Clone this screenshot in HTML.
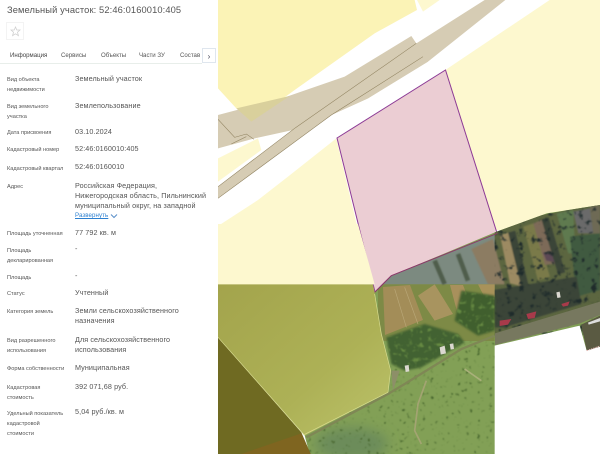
<!DOCTYPE html>
<html><head><meta charset="utf-8">
<style>
html,body{margin:0;padding:0;width:600px;height:454px;overflow:hidden;background:#fff}
body{font-family:"Liberation Sans",sans-serif;position:relative}
#map{position:absolute;left:0;top:0}
#side{position:absolute;left:0;top:0;width:218px;height:454px;background:#fff}
#side div{position:absolute;white-space:nowrap;filter:blur(.25px)}
.l{left:7px;font-size:5.6px;color:#555;line-height:10px;margin-top:1px}
.v{left:75px;font-size:7.2px;color:#555;line-height:10px;letter-spacing:.1px}
.t{top:50.5px;font-size:6.1px;line-height:10px;color:#555}
</style></head><body>
<svg id="map" width="600" height="454" viewBox="0 0 600 454" xmlns="http://www.w3.org/2000/svg">
<defs>
<filter id="n" x="0" y="0" width="100%" height="100%" color-interpolation-filters="sRGB"><feTurbulence type="fractalNoise" baseFrequency="0.085" numOctaves="2" seed="7"/><feColorMatrix values="0 0 0 0 0.28 0 0 0 0 0.4 0 0 0 0 0.18 3.5 3.5 0 0 -4.2"/><feGaussianBlur stdDeviation="1.2"/></filter>
<filter id="n2" x="0" y="0" width="100%" height="100%" color-interpolation-filters="sRGB"><feTurbulence type="fractalNoise" baseFrequency="0.05" numOctaves="3" seed="11"/><feColorMatrix values="0 0 0 0 0.12 0 0 0 0 0.17 0 0 0 0 0.17 3.5 3.5 0 0 -3.9"/><feGaussianBlur stdDeviation="1.5"/></filter>
<filter id="n3" x="0" y="0" width="100%" height="100%" color-interpolation-filters="sRGB"><feTurbulence type="fractalNoise" baseFrequency="0.07" numOctaves="2" seed="3"/><feColorMatrix values="0 0 0 0 0.4 0 0 0 0 0.54 0 0 0 0 0.26 3 3 0 0 -3.2"/><feGaussianBlur stdDeviation="1.5"/></filter>
<filter id="s" x="-10%" y="-10%" width="120%" height="120%"><feGaussianBlur stdDeviation="3"/></filter>
<filter id="s2" x="-10%" y="-10%" width="120%" height="120%"><feGaussianBlur stdDeviation="2"/></filter>
<filter id="s3" x="-30%" y="-30%" width="160%" height="160%"><feGaussianBlur stdDeviation="18"/></filter>
<linearGradient id="ol" x1="0" y1="0" x2="1" y2="1"><stop offset="0" stop-color="#a3a44c"/><stop offset=".6" stop-color="#adb156"/><stop offset="1" stop-color="#bcc36a"/></linearGradient>
<clipPath id="sat"><path d="M260,635 L470,205 L520,155 L836,23 L986,-32 L1146,-57 L1146,368 L1106,380 L1085,305 L830,365 L830,690 L275,690Z"/></clipPath>
<clipPath id="fr"><path d="M505,340L620,300L720,330L740,355L610,430L560,440L520,420ZM730,200L830,215V320L780,335L710,290Z"/></clipPath>
</defs>
<rect x="218" width="382" height="454" fill="#fff"/>
<g transform="translate(218,0) scale(.33333)">
<path d="M0,0H590L597,30L470,100L230,270L100,365L55,325L0,265Z" fill="#fbf3b6"/>
<path d="M597,0H665L615,35Z" fill="#fdf8cf"/>
<path d="M995,0H1146V690H835L682,210Z" fill="#fdf8cf"/>
<path d="M0,678L120,600L210,530L355,415L420,690L440,860H0Z" fill="#fdf8cf"/>
<path d="M0,475L120,415L130,450L0,545Z" fill="#fdf8cf"/>
<path d="M862,0H800L595,130L230,385L0,560V595L340,345L450,295L630,185Z" fill="#d6ccb4"/>
<path d="M0,345L200,292L380,230L580,108L595,130L620,160L630,185L450,295L340,345L225,390L110,415L0,445Z" fill="#d6ccb4"/>
<path d="M55,325L215,288L100,365Z" fill="#d9d09c"/>
<path d="M230,385L595,130M340,345L615,170M0,358L50,412L85,402L108,418M40,432L85,410M0,560L230,385M0,595L340,345" fill="none" stroke="#8d7f5c" stroke-width="1.6"/>
</g>
<path d="M337,138L445.5,70L497,233L391,276L375,292Z" fill="#ebcdd3" stroke="#8c3a95" stroke-width="1"/>
<g transform="translate(218,224) scale(.33333)">
<path d="M0,0H420L470,181H0Z" fill="#fdf8cf"/>
<g clip-path="url(#sat)">
<rect x="250" y="-60" width="900" height="750" fill="#82a056"/>
<ellipse cx="400" cy="660" rx="110" ry="50" fill="#6c8c5a" filter="url(#s3)"/>
<rect x="250" y="340" width="590" height="350" filter="url(#n)"/>
<path d="M460,181L520,155L838,28L870,181Z" fill="#7c8a80"/>
<rect x="480" y="181" width="350" height="170" fill="#7d8a46"/>
<path d="M830,0L1146,-60V240L830,335Z" fill="#5c6640"/>
<g filter="url(#s2)">
<path d="M760,75L825,45L860,181H810Z" fill="#8c7c62"/>
<path d="M846,33L881,23L916,188L876,178Z" fill="#9c8a62"/>
<path d="M916,8L946,-2L996,158L960,170Z" fill="#7a7a48"/>
<path d="M946,-2L981,-17L1016,118L981,123Z" fill="#7d6a58"/>
<path d="M975,85L1005,85L1010,115L985,110Z" fill="#5d4a55"/>
<path d="M1016,-32L1066,-42L1071,88L1051,88Z" fill="#5f7a50"/>
<path d="M1066,-37L1116,-47L1126,28L1081,28Z" fill="#6a6a6a"/>
<path d="M1116,-52L1146,-57V28H1126Z" fill="#6e6a55"/>
<path d="M1056,38L1146,28V198L1076,218Z" fill="#3f5a3f"/>
<path d="M826,198L1076,158L1090,240L860,310L830,310Z" fill="#3a4438"/>
<path d="M881,23L926,208M981,-17L1031,148" fill="none" stroke="#3a4438" stroke-width="22"/>
<path d="M650,110L680,180M720,90L750,170" fill="none" stroke="#4f5d4c" stroke-width="14"/>
</g>
<rect x="830" y="-60" width="316" height="400" filter="url(#n2)"/>
<path d="M495,189L576,183L615,288L501,333Z" fill="#a38d58"/>
<path d="M600,215L650,181L705,270L650,290Z" fill="#a8945f"/>
<path d="M696,183L735,183L762,252L720,273Z" fill="#a8905c"/>
<path d="M780,181H830V220H800Z" fill="#a8925a"/>
<path d="M530,195L565,310M560,190L600,300" stroke="#b9a777" stroke-width="2" fill="none"/>
<g filter="url(#s)">
<path d="M505,340L620,300L720,330L740,355L610,430L560,440L520,420Z" fill="#426230"/>
<path d="M730,200L830,215V320L780,335L710,290Z" fill="#3f5f2d"/>
</g>
<g clip-path="url(#fr)"><rect x="480" y="190" width="350" height="260" filter="url(#n3)"/></g>
<path d="M831,328L1146,233V273L1086,298L831,363Z" fill="#77785f"/>
<path d="M1090,302L1146,275V370L1106,380Z" fill="#5a5a42"/>
<path d="M265,640L510,510L560,480L730,375L830,335" fill="none" stroke="#7f8755" stroke-width="7"/>
<path d="M625,470L600,540L590,620L610,660" fill="none" stroke="#a3a472" stroke-width="5"/>
<path d="M740,435L790,470" fill="none" stroke="#a9b07a" stroke-width="5"/>
<path d="M520,440L545,440L525,500Z" fill="#8d8f68"/>
<path d="M925,270L955,262L950,282L930,285ZM845,290L880,285L870,302L845,306ZM1030,240L1055,232L1050,245L1035,248Z" fill="#a83a4a"/>
<path d="M1015,205L1025,203L1028,220L1018,222ZM560,425L572,423L574,442L563,444ZM695,360L706,358L708,375L698,377ZM665,370L680,365L684,388L668,392Z" fill="#dbd8d0"/>
<path d="M1110,296L1146,282V292L1112,302Z" fill="#ddd"/>
</g>
<path d="M0,181H465L470,205L490,330L518,440L510,505L260,635L0,340Z" fill="url(#ol)"/>
<path d="M0,340L250,625L278,690H0Z" fill="#6f6a22"/>
<path d="M70,690L250,628L278,690Z" fill="#7f6520"/>
<path d="M0,340L258,632L510,505M470,210L490,330L518,440L510,505" fill="none" stroke="#d8dc90" stroke-width="2"/>
<path d="M470,205L520,155L838,28" fill="none" stroke="#8c3a6a" stroke-width="3"/>
<path d="M1106,380L1146,366" fill="none" stroke="#e8b8b8" stroke-width="3" stroke-dasharray="4 3"/>
</g>
</svg>
<div id="side">
<div style="left:7px;top:4px;font-size:9.3px;line-height:12px;color:#555;letter-spacing:.12px">Земельный участок: 52:46:0160010:405</div>
<div style="left:6px;top:22px;width:18px;height:18px;border:1px solid #f3f3f3;box-sizing:border-box"></div>
<svg style="position:absolute;left:10px;top:26px" width="11" height="11" viewBox="0 0 11 11"><path d="M5.5,1L6.8,4H10L7.5,6.2L8.4,9.6L5.5,7.8L2.6,9.6L3.5,6.2L1,4H4.2Z" fill="none" stroke="#d0d0d0" stroke-width=".8"/></svg>
<div class="t" style="left:10px;color:#444">Информация</div>
<div class="t" style="left:61px">Сервисы</div>
<div class="t" style="left:101px">Объекты</div>
<div class="t" style="left:139px">Части ЗУ</div>
<div class="t" style="left:180px">Состав</div>
<div style="left:0;top:63px;width:202px;height:1px;background:#e8eeea"></div>
<div style="left:202px;top:48px;width:14px;height:15px;border:1px solid #dfe6ee;box-sizing:border-box;background:#fff;font-size:8px;line-height:15px;text-align:center;color:#445">›</div>

<div class="l" style="top:74px">Вид объекта</div><div class="l" style="top:84px">недвижимости</div>
<div class="l" style="top:101px">Вид земельного</div><div class="l" style="top:111px">участка</div>
<div class="l" style="top:127px">Дата присвоения</div>
<div class="l" style="top:144px">Кадастровый номер</div>
<div class="l" style="top:162.5px">Кадастровый квартал</div>
<div class="l" style="top:181px">Адрес</div>
<div class="l" style="top:228px">Площадь уточненная</div>
<div class="l" style="top:245px">Площадь</div><div class="l" style="top:255px">декларированная</div>
<div class="l" style="top:272px">Площадь</div>
<div class="l" style="top:288px">Статус</div>
<div class="l" style="top:306px">Категория земель</div>
<div class="l" style="top:335px">Вид разрешенного</div><div class="l" style="top:345px">использования</div>
<div class="l" style="top:363px">Форма собственности</div>
<div class="l" style="top:381.5px">Кадастровая</div><div class="l" style="top:392px">стоимость</div>
<div class="l" style="top:408px">Удельный показатель</div><div class="l" style="top:418px">кадастровой</div><div class="l" style="top:428px">стоимости</div>

<div class="v" style="top:73.5px">Земельный участок</div>
<div class="v" style="top:100.5px">Землепользование</div>
<div class="v" style="top:126.5px">03.10.2024</div>
<div class="v" style="top:144px">52:46:0160010:405</div>
<div class="v" style="top:162px">52:46:0160010</div>
<div class="v" style="top:180.5px">Российская Федерация,</div>
<div class="v" style="top:190.5px">Нижегородская область, Пильнинский</div>
<div class="v" style="top:200.5px">муниципальный округ, на западной</div>
<div class="v" style="top:211px;font-size:6.1px;color:#2b7fd0;text-decoration:underline">Развернуть</div>
<svg style="position:absolute;left:110px;top:213px" width="8" height="6" viewBox="0 0 8 6"><path d="M1,1.5L4,4.5L7,1.5" fill="none" stroke="#5a8fc8" stroke-width="1"/></svg>
<div class="v" style="top:227.5px">77 792 кв. м</div>
<div class="v" style="top:244px">-</div>
<div class="v" style="top:271px">-</div>
<div class="v" style="top:288px">Учтенный</div>
<div class="v" style="top:306px">Земли сельскохозяйственного</div>
<div class="v" style="top:315.5px">назначения</div>
<div class="v" style="top:334.5px">Для сельскохозяйственного</div>
<div class="v" style="top:344.5px">использования</div>
<div class="v" style="top:363px">Муниципальная</div>
<div class="v" style="top:381.5px">392 071,68 руб.</div>
<div class="v" style="top:407px">5,04 руб./кв. м</div>
</div>
</body></html>
